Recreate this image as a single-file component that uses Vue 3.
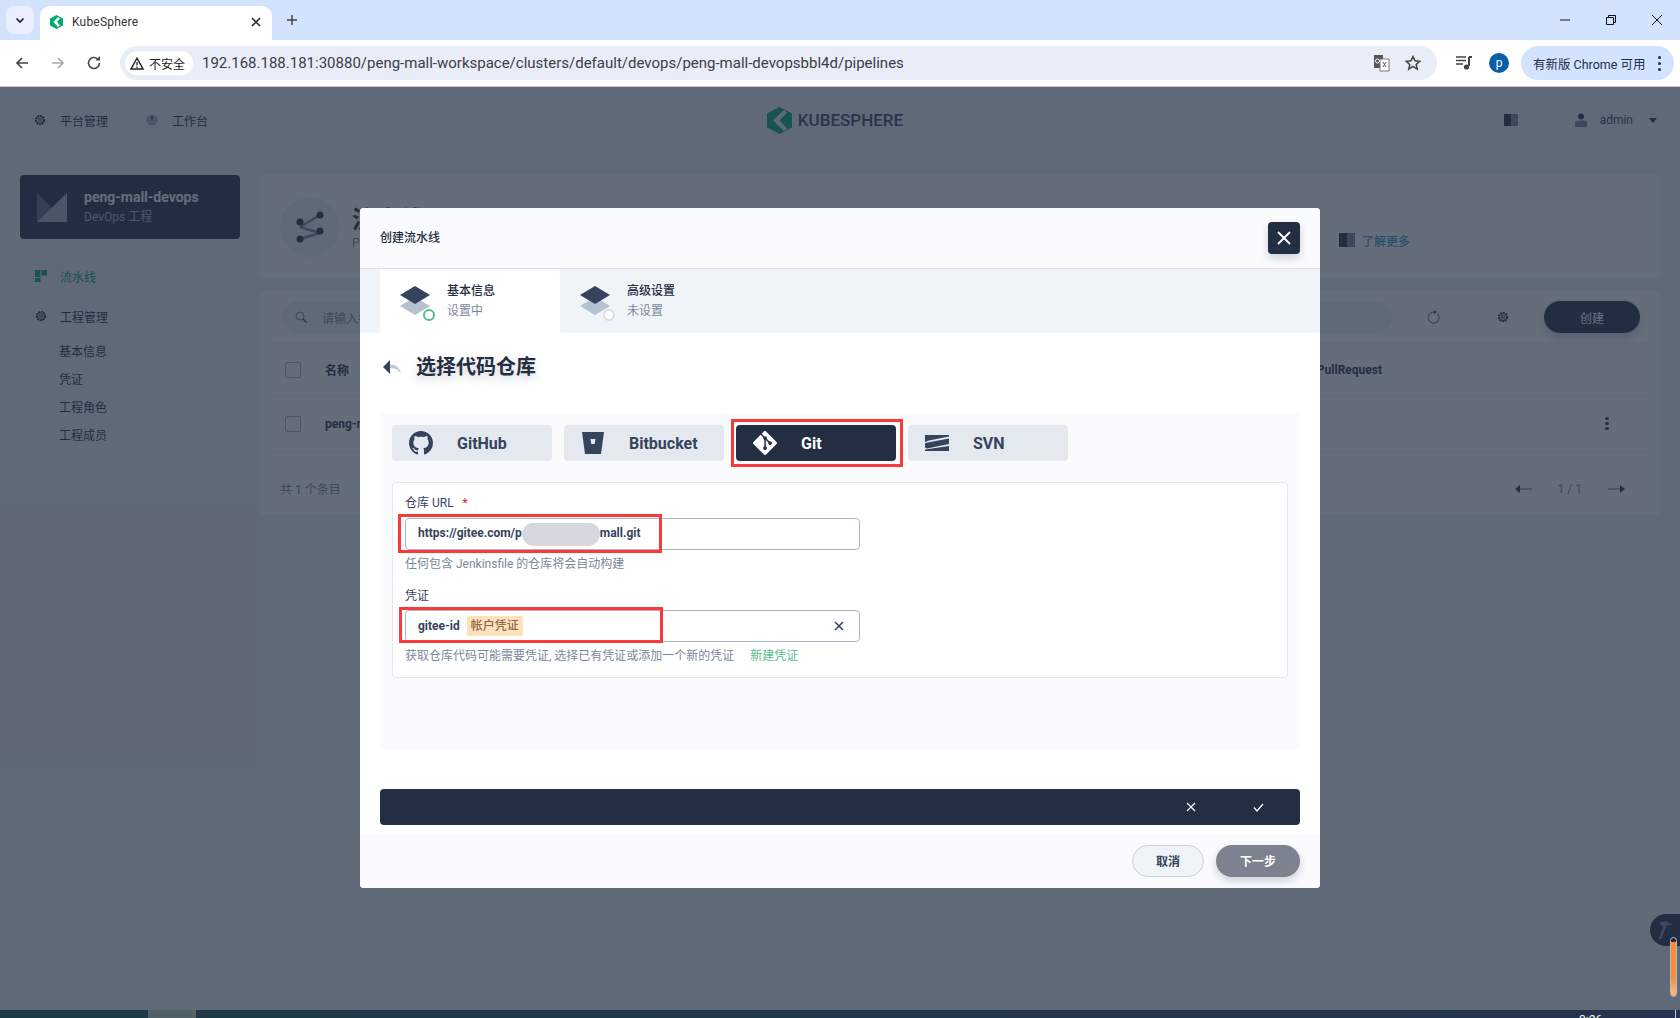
<script setup>
import { ref } from 'vue';

const sideLinks = ['基本信息', '凭证', '工程角色', '工程成员'];
const steps = [
  { title: '基本信息', state: '设置中', active: true },
  { title: '高级设置', state: '未设置', active: false },
];
const sources = ref([
  { name: 'GitHub', icon: 'github' },
  { name: 'Bitbucket', icon: 'bitbucket' },
  { name: 'Git', icon: 'git', selected: true },
  { name: 'SVN', icon: 'svn' },
]);

const url = 'https://gitee.com/p';
const urlTail = 'mall.git';
const address = '192.168.188.181:30880/peng-mall-workspace/clusters/default/devops/peng-mall-devopsbbl4d/pipelines';

const githubPath = 'M8 0C3.58 0 0 3.58 0 8c0 3.54 2.29 6.53 5.47 7.59.4.07.55-.17.55-.38 0-.19-.01-.82-.01-1.49-2.01.37-2.53-.49-2.69-.94-.09-.23-.48-.94-.82-1.13-.28-.15-.68-.52-.01-.53.63-.01 1.08.58 1.23.82.72 1.21 1.87.87 2.33.66.07-.52.28-.87.51-1.07-1.78-.2-3.64-.89-3.64-3.95 0-.87.31-1.59.82-2.15-.08-.2-.36-1.02.08-2.12 0 0 .67-.21 2.2.82.64-.18 1.32-.27 2-.27s1.36.09 2 .27c1.53-1.04 2.2-.82 2.2-.82.44 1.1.16 1.92.08 2.12.51.56.82 1.27.82 2.15 0 3.07-1.87 3.75-3.65 3.95.29.25.54.73.54 1.48 0 1.07-.01 1.93-.01 2.2 0 .21.15.46.55.38A8.01 8.01 0 0 0 16 8c0-4.42-3.58-8-8-8z';
const gitPath = 'M23.546 10.93L13.067.452c-.604-.603-1.582-.603-2.188 0L8.708 2.627l2.76 2.76c.645-.215 1.379-.07 1.889.441.516.515.658 1.258.438 1.9l2.658 2.66c.645-.223 1.387-.078 1.9.435.721.72.721 1.884 0 2.604-.719.719-1.881.719-2.6 0-.539-.541-.674-1.337-.404-1.996L12.86 8.955v6.525c.176.086.342.203.488.348.713.721.713 1.883 0 2.6-.719.721-1.889.721-2.609 0-.719-.719-.719-1.879 0-2.598.182-.18.387-.316.605-.406V8.835c-.217-.091-.424-.222-.6-.401-.545-.545-.676-1.342-.396-2.009L7.636 3.7.45 10.881c-.6.605-.6 1.584 0 2.189l10.48 10.477c.604.604 1.582.604 2.186 0l10.43-10.43c.605-.603.605-1.582 0-2.187';
</script>

<template>
  <div class="screen">
    <!-- Browser chrome -->
    <div class="tabstrip">
      <div class="tab-list-btn">
        <svg width="12" height="12" viewBox="0 0 12 12"><path d="M2.5 4.5 6 8l3.5-3.5" fill="none" stroke="#1f1f1f" stroke-width="1.6" /></svg>
      </div>
      <div class="tab">
        <svg class="favicon" width="13" height="14" viewBox="0 0 26 28">
          <path d="M13 0 26 7v14l-13 7L0 21V7z" fill="#00aa72" />
          <path d="M16 4 7 14l9 10 4-3-6-7 6-7z" fill="#fff" />
        </svg>
        <span class="tab-title">KubeSphere</span>
        <svg class="tab-close" width="10" height="10" viewBox="0 0 10 10"><path d="M1 1l8 8M9 1 1 9" stroke="#1f1f1f" stroke-width="1.5" /></svg>
      </div>
      <svg class="new-tab" width="12" height="12" viewBox="0 0 12 12"><path d="M6 1v10M1 6h10" stroke="#444" stroke-width="1.5" /></svg>
      <div class="window-btns">
        <svg width="12" height="12" viewBox="0 0 12 12"><path d="M1 6h10" stroke="#111" stroke-width="1" /></svg>
        <svg width="12" height="12" viewBox="0 0 12 12"><path d="M3.5 3V1.5h7v7H9M1.5 3.5h7v7h-7z" fill="none" stroke="#111" stroke-width="1" /></svg>
        <svg width="12" height="12" viewBox="0 0 12 12"><path d="M1 1l10 10M11 1 1 11" stroke="#111" stroke-width="1" /></svg>
      </div>
    </div>
    <div class="toolbar">
      <svg class="nav-icon" width="16" height="16" viewBox="0 0 16 16"><path d="M14 8H3M8 3 3 8l5 5" fill="none" stroke="#444" stroke-width="1.6" /></svg>
      <svg class="nav-icon" width="16" height="16" viewBox="0 0 16 16"><path d="M2 8h11M8 3l5 5-5 5" fill="none" stroke="#aaa" stroke-width="1.6" /></svg>
      <svg class="nav-icon" width="16" height="16" viewBox="0 0 16 16"><path d="M13.5 8A5.5 5.5 0 1 1 11.8 4" fill="none" stroke="#444" stroke-width="1.6" /><path d="M9.5 5.5h4.5V1z" fill="#444" /></svg>
      <div class="omnibox">
        <div class="secure-chip">
          <svg width="14" height="13" viewBox="0 0 14 13"><path d="M7 1.2 13 12H1z" fill="none" stroke="#222" stroke-width="1.4" /><path d="M7 5v3.5M7 9.5V11" stroke="#222" stroke-width="1.2" /></svg>
          <span>不安全</span>
        </div>
        <span class="address">{{ address }}</span>
        <svg class="translate" width="17" height="18" viewBox="0 0 17 18">
          <path d="M1 1h9v13H1z" fill="#555" />
          <path d="M7 5h9v12H7z" fill="#fff" stroke="#777" />
          <path d="M10 8l3 5M13 8l-3 5" stroke="#555" stroke-width="1" />
          <circle cx="4.5" cy="7" r="2" fill="none" stroke="#fff" />
        </svg>
        <svg class="star" width="16" height="16" viewBox="0 0 16 16"><path d="M8 1.5l2 4.3 4.7.5-3.5 3.2 1 4.6L8 11.3l-4.2 2.8 1-4.6L1.3 6.3 6 5.8z" fill="none" stroke="#444" stroke-width="1.5" /></svg>
      </div>
      <svg class="media" width="16" height="14" viewBox="0 0 16 14">
        <path d="M0 1h10M0 4.5h10M0 8h7" stroke="#444" stroke-width="1.5" />
        <path d="M13 1v9" stroke="#444" stroke-width="2" /><path d="M13 1h3" stroke="#444" stroke-width="2" />
        <circle cx="10.5" cy="11" r="2.6" fill="#444" />
      </svg>
      <div class="avatar">p</div>
      <div class="update-pill">
        <span>有新版 Chrome 可用</span>
        <i class="pill-dots"><b></b><b></b><b></b></i>
      </div>
    </div>

    <!-- KubeSphere page -->
    <div class="page">
      <header class="top-nav">
        <div class="top-left">
          <span class="top-link">
            <svg class="gear" width="12" height="12" viewBox="0 0 12 12"><circle cx="6" cy="6" r="4" fill="none" stroke="#242e42" stroke-width="2.2" stroke-dasharray="2 .6" /><circle cx="6" cy="6" r="2.4" fill="#79879c" /></svg>
            平台管理
          </span>
          <span class="top-link">
            <svg width="12" height="12" viewBox="0 0 12 12"><circle cx="6" cy="6" r="5.5" fill="#abb4c4" /><path d="M6 2v4.5" stroke="#242e42" stroke-width="1.2" /></svg>
            工作台
          </span>
        </div>
        <div class="logo">
          <svg width="25" height="27" viewBox="0 0 25 27">
            <path d="M12.500 0 25 6.500v14L12.500 27 0 20.500v-14z" fill="#00aa72" />
            <path d="M17 3 6 13.500 17 24l3-2.500-7.500-8 7.500-8z" fill="#eff4f9" />
          </svg>
          <span>KUBESPHERE</span>
        </div>
        <div class="top-right">
          <svg width="14" height="12" viewBox="0 0 14 12"><path d="M0 0h7v12H0z" fill="#242e42" /><path d="M7 0h7v12H7z" fill="#79879c" /></svg>
          <span class="user">
            <svg width="12" height="14" viewBox="0 0 12 14"><circle cx="6" cy="3.500" r="3" fill="#242e42" /><path d="M0 14V9.500C0 8 2 7.500 6 7.500s6 .5 6 2V14z" fill="#79879c" /></svg>
            <span>admin</span>
            <i class="caret"></i>
          </span>
        </div>
      </header>

      <div class="workspace">
        <aside class="sidebar">
          <div class="project-card">
            <svg width="30" height="29" viewBox="0 0 30 29">
              <path d="M0 0 15 15 0 29z" fill="#79879c" opacity=".65" />
              <path d="M30 0v29H0z" fill="#d8dee5" opacity=".75" />
            </svg>
            <div>
              <div class="project-name">peng-mall-devops</div>
              <div class="project-type">DevOps 工程</div>
            </div>
          </div>
          <div class="side-item current">
            <svg width="12" height="12" viewBox="0 0 12 12"><path d="M0 0h5.500v7H0zM6.500 0H12v5.500H6.500zM0 8h5.500v4H0z" fill="#00aa72" /></svg>
            流水线
          </div>
          <div class="side-item">
            <svg width="12" height="12" viewBox="0 0 12 12"><circle cx="6" cy="6" r="4" fill="none" stroke="#242e42" stroke-width="2.200" stroke-dasharray="2 .6" /><circle cx="6" cy="6" r="2.400" fill="#79879c" /></svg>
            工程管理
          </div>
          <div class="side-sub">
            <span v-for="link in sideLinks" :key="link">{{ link }}</span>
          </div>
        </aside>

        <main class="main">
          <section class="banner">
            <div class="banner-icon">
              <svg width="28" height="32" viewBox="0 0 28 32">
                <path d="M4 16 24 4M4 16l20 6M4 28l20-6" stroke="#79879c" stroke-width="2.500" />
                <circle cx="4" cy="11" r="3.500" fill="#242e42" /><circle cx="4" cy="28" r="3.500" fill="#242e42" />
                <circle cx="24" cy="4" r="3.500" fill="#242e42" /><circle cx="24" cy="20" r="3.500" fill="#242e42" />
              </svg>
            </div>
            <div class="banner-text">
              <div class="banner-title">流水线</div>
              <div class="banner-desc">Pipeline</div>
            </div>
            <div class="learn-more">
              <svg width="16" height="14" viewBox="0 0 16 14"><path d="M0 0h8v14H0z" fill="#242e42" /><path d="M8 0h8v14H8z" fill="#79879c" /></svg>
              了解更多
            </div>
          </section>

          <section class="table-card">
            <div class="table-tools">
              <div class="search">
                <svg width="12" height="12" viewBox="0 0 12 12"><circle cx="5" cy="5" r="4" fill="none" stroke="#79879c" /><path d="M8 8l3.500 3.500" stroke="#242e42" stroke-width="1.200" /></svg>
                <span>请输入名称进行查找</span>
              </div>
              <svg class="tool" width="14" height="14" viewBox="0 0 14 14"><path d="M11.500 3.500a5.500 5.500 0 1 1-3-1.400" fill="none" stroke="#79879c" stroke-width="1.200" /><path d="M8 0v4l3-2z" fill="#242e42" /></svg>
              <svg class="tool tool-gear" width="12" height="12" viewBox="0 0 12 12"><circle cx="6" cy="6" r="4" fill="none" stroke="#242e42" stroke-width="2.200" stroke-dasharray="2 .6" /><circle cx="6" cy="6" r="2.400" fill="#79879c" /></svg>
              <button class="create-btn">创建</button>
            </div>
            <div class="table-row head">
              <i class="check"></i>
              <span class="cell-name">名称</span>
              <span class="cell-pr">PullRequest</span>
            </div>
            <div class="table-row">
              <i class="check"></i>
              <span class="cell-name">peng-mall</span>
              <span class="row-more"><b></b><b></b><b></b></span>
            </div>
            <div class="table-foot">
              <span>共 1 个条目</span>
              <span class="pager">
                <svg width="17" height="10" viewBox="0 0 17 10"><path d="M5 5h12" stroke="#79879c" stroke-width="1.200" /><path d="M5 1v8L0 5z" fill="#242e42" /></svg>
                <span>1 / 1</span>
                <svg width="17" height="10" viewBox="0 0 17 10"><path d="M0 5h12" stroke="#79879c" stroke-width="1.200" /><path d="M12 1v8l5-4z" fill="#242e42" /></svg>
              </span>
            </div>
          </section>
        </main>
      </div>

      <div class="toolbox">
        <svg width="18" height="20" viewBox="0 0 18 20"><path d="M9 6 4 19" stroke="#79879c" stroke-width="2.600" /><path d="M5 2l5-1 7 4-3 .5-3-.5-1 2.500-6-2.500z" fill="#79879c" /></svg>
      </div>

      <!-- Create pipeline dialog -->
      <div class="overlay">
        <div class="modal">
          <div class="modal-head">
            <span class="modal-title">创建流水线</span>
            <button class="modal-close">
              <svg width="14" height="14" viewBox="0 0 14 14"><path d="M1 1l12 12M13 1 1 13" stroke="#fff" stroke-width="1.800" /></svg>
            </button>
          </div>
          <div class="steps">
            <div v-for="step in steps" :key="step.title" class="step" :class="{ active: step.active }">
              <span class="step-icon">
                <svg width="30" height="31" viewBox="0 0 30 31">
                  <path d="M15 11 30 20 15 29 0 20z" fill="#b5c1ce" />
                  <path d="M15 0 30 9 15 18 0 9z" fill="#36435c" />
                </svg>
                <i class="step-ring"></i>
              </span>
              <span>
                <span class="step-title">{{ step.title }}</span>
                <span class="step-state">{{ step.state }}</span>
              </span>
            </div>
          </div>
          <div class="modal-body">
            <div class="section-title">
              <svg width="18" height="14" viewBox="0 0 18 14">
                <path d="M7 4.500c6 0 10 3 11 9.500-2-4-6-6-11-6z" fill="#c1c9d1" />
                <path d="M7 0v14L0 7z" fill="#36435c" />
              </svg>
              <h2>选择代码仓库</h2>
            </div>

            <div class="repo-panel">
              <div class="sources">
                <div v-for="src in sources" :key="src.name" class="source" :class="{ selected: src.selected }">
                  <svg v-if="src.icon === 'github'" width="24" height="24" viewBox="0 0 16 16"><path :d="githubPath" fill="#36435c" /></svg>
                  <svg v-else-if="src.icon === 'bitbucket'" width="24" height="24" viewBox="0 0 24 24">
                    <path fill-rule="evenodd" d="M1 1h22l-3 22H4zM9.500 8l.8 5h3.400l.8-5z" fill="#36435c" />
                  </svg>
                  <svg v-else-if="src.icon === 'git'" width="24" height="24" viewBox="0 0 24 24"><path :d="gitPath" fill="#fff" /></svg>
                  <svg v-else width="24" height="24" viewBox="0 0 24 24">
                    <path d="M0 4h24v1.500L4 9.500 0 11zM24 7.500V13L2 17.500 0 16.500V12zM24 15v5H0v-1.500z" fill="#36435c" />
                  </svg>
                  <span>{{ src.name }}</span>
                  <i v-if="src.selected" class="mark mark-git"></i>
                </div>
              </div>

              <div class="form-card">
                <label class="field-label">仓库 URL <em>*</em></label>
                <div class="input">
                  <span>{{ url }}<i class="redacted"></i>{{ urlTail }}</span>
                  <i class="mark mark-url"></i>
                </div>
                <p class="help">任何包含 Jenkinsfile 的仓库将会自动构建</p>

                <label class="field-label second">凭证</label>
                <div class="input">
                  <span>gitee-id</span>
                  <span class="cred-tag">帐户凭证</span>
                  <svg class="clear" width="10" height="10" viewBox="0 0 10 10"><path d="M1 1l8 8M9 1 1 9" stroke="#36435c" stroke-width="1.500" /></svg>
                  <i class="mark mark-cred"></i>
                </div>
                <p class="help">获取仓库代码可能需要凭证, 选择已有凭证或添加一个新的凭证<a class="new-cred">新建凭证</a></p>
              </div>
            </div>

            <div class="confirm-bar">
              <svg width="10" height="10" viewBox="0 0 10 10"><path d="M1 1l8 8M9 1 1 9" stroke="#fff" stroke-width="1.200" /></svg>
              <svg width="11" height="9" viewBox="0 0 11 9"><path d="M1 4.500 4 8l6-7" fill="none" stroke="#fff" stroke-width="1.200" /></svg>
            </div>
          </div>
          <div class="modal-foot">
            <button class="btn-cancel">取消</button>
            <button class="btn-next">下一步</button>
          </div>
        </div>
      </div>

      <div class="volume"><i></i></div>
    </div>

    <!-- Taskbar remnant -->
    <div class="taskbar">
      <i class="task-active"></i>
      <span class="clock">0:26</span>
      <i class="task-end"></i>
    </div>
  </div>
</template>

<style>
html, body {
  margin: 0;
  height: 100%;
  overflow: hidden;
}
</style>

<style scoped>
.screen {
  display: flex;
  flex-direction: column;
  width: 1680px;
  height: 1018px;
  overflow: hidden;
  font-family: Roboto, "Noto Sans CJK SC", sans-serif;
  font-size: 12px;
  color: #242e42;
}
button {
  font-family: inherit;
  border: 0;
  padding: 0;
}

/* chrome */
.tabstrip {
  display: flex;
  align-items: flex-end;
  height: 40px;
  background: #d3e3fd;
  position: relative;
}
.tab-list-btn {
  display: flex;
  align-items: center;
  justify-content: center;
  width: 28px;
  height: 28px;
  margin: 0 6px 6px;
  border-radius: 8px;
  background: #e9effc;
}
.tab {
  display: flex;
  align-items: center;
  width: 232px;
  height: 34px;
  box-sizing: border-box;
  padding: 0 11px 3px 10px;
  background: #fff;
  border-radius: 10px 10px 0 0;
}
.tab-title {
  flex: 1;
  margin-left: 9px;
  font-size: 12px;
  color: #333;
  letter-spacing: 0.2px;
}
.new-tab {
  margin: 0 0 14px 14px;
}
.window-btns {
  display: flex;
  gap: 34px;
  margin: 0 17px 14px auto;
}
.toolbar {
  display: flex;
  align-items: center;
  height: 46px;
  background: #fff;
  border-bottom: 1px solid #c8ccd0;
  box-sizing: content-box;
  padding-bottom: 0;
}
.nav-icon {
  margin-left: 14px;
  margin-right: 6px;
}
.nav-icon + .nav-icon {
  margin-left: 14px;
}
.omnibox {
  display: flex;
  align-items: center;
  width: 1317px;
  height: 34px;
  margin-left: 12px;
  border-radius: 17px;
  background: #e9edf8;
}
.secure-chip {
  display: flex;
  align-items: center;
  gap: 5px;
  width: 68px;
  height: 24px;
  box-sizing: border-box;
  margin-left: 5px;
  padding-left: 5px;
  border-radius: 12px;
  background: #fff;
  color: #222;
}
.address {
  margin-left: 9px;
  font-size: 15px;
  color: #3c4043;
  white-space: nowrap;
}
.translate {
  margin-left: auto;
}
.star {
  margin: 0 16px 0 15px;
}
.media {
  margin-left: 19px;
}
.avatar {
  display: flex;
  align-items: center;
  justify-content: center;
  width: 20px;
  height: 20px;
  margin-left: 17px;
  border-radius: 50%;
  background: #0a5ea6;
  color: #fff;
  font-size: 12px;
  line-height: 18px;
}
.update-pill {
  display: flex;
  align-items: center;
  justify-content: space-between;
  width: 153px;
  height: 34px;
  box-sizing: border-box;
  margin-left: 12px;
  padding: 0 13px 0 12px;
  border-radius: 17px;
  background: #d3e3fd;
  font-size: 12.5px;
  color: #1f2c4a;
  white-space: nowrap;
}
.pill-dots {
  display: flex;
  flex-direction: column;
  gap: 3px;
}
.pill-dots b {
  width: 3px;
  height: 3px;
  border-radius: 50%;
  background: #1f2c4a;
}

/* page under the overlay */
.page {
  position: relative;
  flex: 1;
  background: #eff4f9;
}
.top-nav {
  display: grid;
  grid-template-columns: 1fr auto 1fr;
  align-items: center;
  height: 68px;
  box-sizing: border-box;
  padding: 0 23px 2px 34px;
}
.top-left {
  display: flex;
  gap: 38px;
}
.top-link {
  display: flex;
  align-items: center;
  gap: 14px;
  white-space: nowrap;
}
.logo {
  display: flex;
  align-items: center;
  gap: 6px;
  font-size: 17px;
  font-weight: 500;
  color: #36435c;
  margin-right: 21px;
}
.top-right {
  display: flex;
  align-items: center;
  justify-content: flex-end;
  gap: 57px;
  color: #79879c;
}
.user {
  display: flex;
  align-items: center;
  gap: 13px;
  color: #36435c;
}
.caret {
  width: 0;
  height: 0;
  margin-left: 3px;
  border-left: 4.500px solid transparent;
  border-right: 4.500px solid transparent;
  border-top: 5px solid #242e42;
}
.workspace {
  display: flex;
  padding: 20px 20px 0;
  gap: 20px;
}
.sidebar {
  width: 220px;
  flex: none;
}
.project-card {
  display: flex;
  align-items: center;
  gap: 17px;
  height: 64px;
  box-sizing: border-box;
  padding-left: 17px;
  border-radius: 4px;
  background: #242e42;
  color: #fff;
}
.project-name {
  font-size: 14px;
  font-weight: 700;
  line-height: 20px;
}
.project-type {
  line-height: 20px;
  color: #abb4c4;
}
.side-item {
  display: flex;
  align-items: center;
  gap: 13px;
  height: 20px;
  margin: 27px 0 0 15px;
  color: #242e42;
}
.side-item + .side-item {
  margin-top: 20px;
}
.side-item.current {
  color: #00aa72;
}
.side-sub {
  display: flex;
  flex-direction: column;
  margin: 12px 0 0 39px;
  line-height: 28px;
}
.main {
  flex: 1;
}
.banner {
  display: flex;
  align-items: center;
  height: 104px;
  box-sizing: border-box;
  padding: 0 250px 0 20px;
  border-radius: 4px;
  background: #fff;
}
.banner-icon {
  display: flex;
  align-items: center;
  justify-content: center;
  width: 60px;
  height: 60px;
  border-radius: 50%;
  background: #eff4f9;
}
.banner-text {
  flex: 1;
  margin-left: 12px;
}
.banner-title {
  font-size: 24px;
  font-weight: 700;
  line-height: 32px;
}
.banner-desc {
  color: #79879c;
}
.learn-more {
  display: flex;
  align-items: center;
  gap: 7px;
  margin-top: 26px;
  color: #329dce;
  font-weight: 500;
}
.table-card {
  margin-top: 12px;
  border-radius: 4px;
  background: #fff;
}
.table-tools {
  display: flex;
  align-items: center;
  height: 52px;
  padding: 0 20px;
}
.search {
  display: flex;
  align-items: center;
  gap: 15px;
  width: 1110px;
  height: 32px;
  box-sizing: border-box;
  margin-left: 2px;
  padding-left: 13px;
  border-radius: 16px;
  background: #eff4f9;
  color: #79879c;
}
.tool {
  margin-left: 34px;
}
.tool-gear {
  margin-left: 57px;
}
.create-btn {
  width: 96px;
  height: 32px;
  margin-left: 35px;
  border-radius: 16px;
  background: #242e42;
  color: #fff;
  font-size: 12px;
  box-shadow: 0 4px 8px rgba(36, 46, 66, 0.2);
}
.table-row {
  display: flex;
  align-items: center;
  height: 56px;
  margin: 0 12px;
  padding-left: 13px;
  box-sizing: border-box;
  border-top: 1px solid #eff4f9;
}
.table-row.head {
  height: 52px;
}
.check {
  width: 16px;
  height: 16px;
  box-sizing: border-box;
  border: 1px solid #abb4c4;
  border-radius: 2px;
  background: #fff;
}
.cell-name {
  margin-left: 24px;
  font-weight: 700;
}
.cell-pr {
  margin-left: auto;
  margin-right: 266px;
  font-weight: 700;
}
.row-more {
  display: flex;
  flex-direction: column;
  gap: 2px;
  margin-left: auto;
  margin-right: 39px;
}
.row-more b {
  width: 4px;
  height: 3px;
  border-radius: 50%;
  background: #242e42;
}
.table-foot {
  display: flex;
  align-items: center;
  justify-content: space-between;
  height: 64px;
  margin: 0 12px;
  padding: 10px 23px 0 8px;
  box-sizing: border-box;
  border-top: 1px solid #eff4f9;
  color: #79879c;
}
.pager {
  display: flex;
  align-items: center;
  gap: 26px;
}
.toolbox {
  position: absolute;
  right: -3px;
  top: 827px;
  display: flex;
  align-items: center;
  padding-left: 6px;
  width: 33px;
  height: 32px;
  box-sizing: border-box;
  border-radius: 16px 0 0 16px;
  background: #242e42;
}

/* dialog */
.overlay {
  position: absolute;
  inset: 0;
  display: flex;
  justify-content: center;
  padding-top: 121px;
  background: rgba(35, 45, 65, 0.7);
}
.modal {
  width: 960px;
  height: 680px;
  display: flex;
  flex-direction: column;
  border-radius: 4px;
  background: #fff;
  overflow: hidden;
}
.modal-head {
  display: flex;
  align-items: center;
  justify-content: space-between;
  flex: none;
  height: 60px;
  padding: 0 20px;
  background: #f9fbfd;
  border-bottom: 1px solid #d8dee5;
}
.modal-title {
  font-weight: 500;
  margin-top: -3px;
}
.modal-close {
  display: flex;
  align-items: center;
  justify-content: center;
  width: 32px;
  height: 32px;
  border-radius: 4px;
  background: #242e42;
  box-shadow: 0 4px 8px rgba(36, 46, 66, 0.2);
}
.steps {
  display: flex;
  flex: none;
  height: 64px;
  padding-left: 20px;
  background: #eff4f9;
}
.step {
  display: flex;
  align-items: center;
  gap: 17px;
  width: 180px;
  box-sizing: border-box;
  padding-left: 20px;
}
.step.active {
  background: #fff;
}
.step-icon {
  position: relative;
  display: flex;
}
.step-ring {
  position: absolute;
  right: -5px;
  bottom: -4px;
  width: 12px;
  height: 12px;
  box-sizing: border-box;
  border: 2px solid #d8dee5;
  border-radius: 50%;
  background: #fff;
}
.active .step-ring {
  border-color: #55bc8a;
}
.step-title {
  display: block;
  font-weight: 500;
  line-height: 20px;
}
.step-state {
  display: block;
  line-height: 20px;
  color: #79879c;
}
.modal-body {
  flex: 1;
  padding: 0 20px;
}
.section-title {
  display: flex;
  align-items: center;
  gap: 15px;
  height: 68px;
  padding-left: 3px;
  margin-bottom: 12px;
}
.section-title h2 {
  margin: 0;
  font-size: 20px;
  font-weight: 700;
  line-height: 28px;
  text-shadow: 0 4px 8px rgba(36, 46, 66, 0.2);
}
.repo-panel {
  height: 336px;
  box-sizing: border-box;
  padding: 12px;
  background: #f9fbfd;
  border-radius: 4px;
}
.sources {
  display: flex;
  gap: 12px;
}
.source {
  position: relative;
  display: flex;
  align-items: center;
  gap: 24px;
  width: 160px;
  height: 36px;
  box-sizing: border-box;
  padding-left: 17px;
  border-radius: 4px;
  background: #e3e9ef;
  font-size: 16px;
  font-weight: 700;
  color: #36435c;
}
.source.selected {
  background: #242e42;
  color: #fff;
}
.mark {
  position: absolute;
  box-sizing: border-box;
  border: 3px solid #f93a3a;
  pointer-events: none;
}
.mark-git {
  left: -5px;
  top: -6px;
  width: 172px;
  height: 48px;
}
.form-card {
  margin-top: 21px;
  height: 196px;
  box-sizing: border-box;
  padding: 10px 12px 0;
  border: 1px solid #e3e9ef;
  border-radius: 4px;
  background: #fff;
}
.field-label {
  display: block;
  line-height: 20px;
  color: #36435c;
}
.field-label em {
  margin-left: 6px;
  font-style: normal;
  color: #ca2621;
}
.field-label.second {
  margin-top: 12px;
}
.input {
  position: relative;
  display: flex;
  align-items: center;
  width: 455px;
  height: 32px;
  margin-top: 5px;
  box-sizing: border-box;
  padding: 0 12px;
  border: 1px solid #abb4c4;
  border-radius: 4px;
  background: #fff;
  font-weight: 700;
  color: #36435c;
  white-space: nowrap;
}
.field-label.second + .input {
  margin-top: 4px;
}
.redacted {
  display: inline-block;
  width: 78px;
  height: 22px;
  margin-left: 0;
  vertical-align: middle;
  border-radius: 11px;
  background: #d5d8de;
  box-shadow: 0 2px 0 -1px #f8d3d3, 0 -1px 0 -1px #f8e3e3;
}
.mark-url {
  left: -8px;
  top: -5px;
  width: 264px;
  height: 39px;
}
.mark-cred {
  left: -7px;
  top: -4px;
  width: 264px;
  height: 36px;
}
.cred-tag {
  margin-left: 7px;
  padding: 0 4px;
  line-height: 20px;
  border-radius: 2px;
  background: #ffe1be;
  color: #8d6a45;
  font-weight: 500;
}
.clear {
  margin-left: auto;
  margin-right: 3px;
}
.help {
  margin: 4px 0 0;
  line-height: 20px;
  color: #79879c;
}
.new-cred {
  margin-left: 16px;
  color: #55bc8a;
}
.confirm-bar {
  display: flex;
  align-items: center;
  justify-content: flex-end;
  gap: 57px;
  height: 36px;
  margin-top: 40px;
  padding-right: 36px;
  border-radius: 4px;
  background: #242e42;
}
.modal-foot {
  display: flex;
  justify-content: flex-end;
  align-items: center;
  gap: 12px;
  flex: none;
  height: 55px;
  padding: 0 20px;
  background: #f9fbfd;
}
.btn-cancel,
.btn-next {
  height: 32px;
  border-radius: 16px;
  font-size: 12px;
  font-weight: 700;
}
.btn-cancel {
  width: 72px;
  box-sizing: border-box;
  border: 1px solid #ccd3db;
  background: #eff4f9;
  color: #36435c;
}
.btn-next {
  width: 84px;
  background: #7d8290;
  color: #fff;
  box-shadow: 0 4px 8px rgba(36, 46, 66, 0.2);
}
.volume {
  position: absolute;
  right: 3px;
  top: 850px;
  width: 7px;
  height: 60px;
  box-sizing: border-box;
  border: 1px solid #b9bec6;
  border-radius: 4px;
  background: #20283a;
  overflow: hidden;
}
.volume i {
  display: block;
  height: 55px;
  margin-top: 4px;
  background: linear-gradient(#f98a3c 65%, #fbc384);
}
.taskbar {
  position: relative;
  flex: none;
  height: 8px;
  background: linear-gradient(90deg, #1f3a45, #253450);
  overflow: hidden;
}
.task-active {
  position: absolute;
  left: 148px;
  top: 0;
  width: 44px;
  height: 8px;
  background: #4d6167;
  border-right: 4px solid #5a6268;
}
.clock {
  position: absolute;
  left: 1579px;
  top: 3px;
  color: #fff;
  font-size: 12px;
  line-height: 14px;
}
.task-end {
  position: absolute;
  left: 1675px;
  top: 0;
  width: 1px;
  height: 8px;
  background: #c8ccd0;
}
</style>
